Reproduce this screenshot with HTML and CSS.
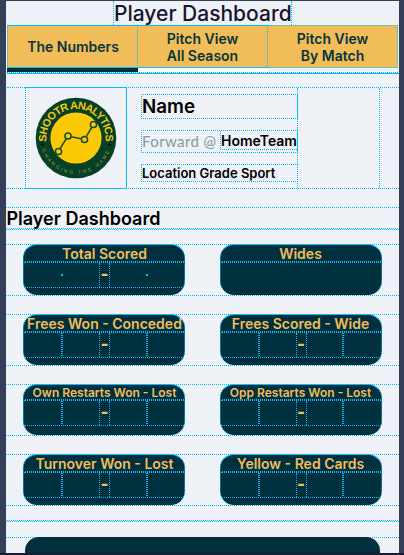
FILE: index.html
```html
<!DOCTYPE html>
<html lang="en">
<head>
<meta charset="utf-8">
<title>Player Dashboard</title>
<link rel="stylesheet" href="styles.css">
</head>
<body>
<main class="page">
  <header class="top"><h1>Player Dashboard</h1></header>
  <nav class="tabs">
    <a class="tab active"><span>The Numbers</span></a>
    <a class="tab"><span>Pitch View<br>All Season</span></a>
    <a class="tab last"><span>Pitch View<br>By Match</span></a>
  </nav>
  <section class="profile">
    <div class="logo">
      <svg width="82" height="82" viewBox="0 0 82 82">
        <defs>
          <path id="upper" d="M11.600 45A29.600 29.600 0 1 1 70.400 45"/>
          <path id="lower" d="M5.500 47A36 36 0 0 0 76.500 47"/>
        </defs>
        <circle cx="41" cy="41" r="40.300" fill="#064029"/>
        <circle cx="41" cy="41" r="25.600" fill="#fbc905"/>
        <text class="brand"><textPath href="#upper" startOffset="0.300" textLength="99">SHOOTR ANALYTICS</textPath></text>
        <text class="motto"><textPath href="#lower" startOffset="6" textLength="87">CHANGING THE GAME</textPath></text>
        <path d="M7.500 45.500v4M5.500 47.500h4M74.500 45.500v4M72.500 47.500h4" stroke="#001713"/>
        <g fill="#fbc905" stroke="#174c27" stroke-width="1.500">
          <path fill="none" d="M23.500 54L33 39 49.500 42.500 58.500 27.500"/>
          <circle cx="23.500" cy="54.500" r="3.100"/><circle cx="33" cy="39" r="3.100"/><circle cx="49.500" cy="42.500" r="3.100"/><circle cx="58.500" cy="27.500" r="3.100"/>
        </g>
      </svg>
    </div>
    <div class="details">
      <div class="name">Name</div>
      <div class="role"><span class="position">Forward @</span><span class="team">HomeTeam</span></div>
      <div class="meta">Location Grade Sport</div>
    </div>
    <div class="spare"></div>
  </section>
  <h2>Player Dashboard</h2>
  <section class="row first">
    <article class="card dots"><h3>Total Scored</h3><div class="cells"><i></i><b>-</b><i></i></div></article>
    <article class="card empty"><h3>Wides</h3></article>
  </section>
  <section class="row">
    <article class="card"><h3>Frees Won - Conceded</h3><div class="cells"><i></i><b>-</b><i></i></div></article>
    <article class="card"><h3>Frees Scored - Wide</h3><div class="cells"><i></i><b>-</b><i></i></div></article>
  </section>
  <section class="row compact">
    <article class="card"><h3>Own Restarts Won - Lost</h3><div class="cells"><i></i><b>-</b><i></i></div></article>
    <article class="card"><h3>Opp Restarts Won - Lost</h3><div class="cells"><i></i><b>-</b><i></i></div></article>
  </section>
  <section class="row final">
    <article class="card"><h3>Turnover Won - Lost</h3><div class="cells"><i></i><b>-</b><i></i></div></article>
    <article class="card"><h3>Yellow - Red Cards</h3><div class="cells"><i></i><b>-</b><i></i></div></article>
  </section>
  <div class="divider"></div>
  <section class="chart"><div class="panel"></div></section>
</main>
</body>
</html>
```
FILE: styles.css
```css
* { box-sizing: border-box; }
:root {
  --guide: #00bfff;
  --navy: #002f3e;
  --gold: #f0bd59;
  --dots: repeating-linear-gradient(90deg, var(--guide) 0 1px, transparent 1px 2px);
}
body {
  margin: 0;
  height: 555px;
  overflow: hidden;
  background: #334058;
  border-top: 1px solid #334058;
  border-bottom: 2px solid #181b33;
  padding: 0 5px 0 6px;
  font-family: Inter, "Liberation Sans", sans-serif;
}
.page { height: 552px; overflow: hidden; background: #eef1f6; }
h1, h2, h3 { margin: 0; }
.top { height: 24px; display: flex; padding-left: 107px; }
h1 {
  width: 179px;
  border: dotted var(--guide);
  border-width: 0 1px;
  font-size: 21px;
  line-height: 26px;
  font-weight: 500;
  letter-spacing: 0;
  color: #17142e;
  white-space: nowrap;
}
.tabs {
  display: grid;
  grid-template-columns: 131px 130px 130px;
  height: 49px;
  margin-left: 1px;
  border-bottom: 1px solid var(--guide);
  background: var(--dots) 0 100% / 100% 1px no-repeat;
}
.tab { height: 47px; background: #fff; }
.tab span {
  display: flex;
  align-items: center;
  justify-content: center;
  height: 43px;
  border-top: 1px solid var(--guide);
  border-bottom: 1px solid var(--guide);
  border-right: 1px dotted var(--guide);
  background: var(--gold);
  color: #07343b;
  font-size: 14px;
  line-height: 17px;
  font-weight: 600;
  text-align: center;
}
.active { background: var(--navy); }
.active span { padding-left: 1px; border-left: 1px dotted var(--guide); }
.last { background: #eef1f6; }
.last span { border-top-style: dotted; border-bottom-style: dotted; }
.profile {
  display: flex;
  height: 102px;
  margin: 13px 0 0 1px;
  border: dotted var(--guide);
  border-width: 1px 0;
}
.logo {
  width: 102px;
  height: 102px;
  margin: -1px 0 0 18px;
  padding: 9px 0 0 9px;
  border: 1px solid var(--guide);
  border-left-style: dotted;
}
.logo svg { display: block; }
.brand { font: 700 10.800px "Liberation Sans", sans-serif; fill: #f3c907; }
.motto { font: 4.800px "Liberation Sans", sans-serif; fill: #a3a317; }
.details {
  width: 171px;
  padding: 6px 0 0 14px;
  border-right: 1px dotted var(--guide);
}
.name, .role, .meta { width: 157px; border: 1px dotted var(--guide); white-space: nowrap; }
.name { height: 25px; font-size: 18.800px; line-height: 23px; font-weight: 600; }
.role { display: flex; height: 23px; margin-top: 11px; }
.position { width: 78px; font: 400 15px/21px Lato, sans-serif; letter-spacing: .4px; color: #7f9da2; }
.team { height: 19px; border-left: 1px dotted var(--guide); border-bottom: 1px dotted var(--guide); font-size: 14px; line-height: 20px; font-weight: 600; }
.meta { height: 18px; margin-top: 11px; font-size: 13px; line-height: 16px; font-weight: 600; }
.spare { width: 82px; border-right: 1px dotted var(--guide); }
h2 {
  height: 23px;
  margin-top: 18px;
  border: dotted var(--guide);
  border-width: 1px 0;
  background: var(--dots) 1px 100% / 100% 1px no-repeat;
  font-size: 18px;
  line-height: 22px;
  font-weight: 600;
  text-indent: .5px;
}
.row {
  display: flex;
  height: 52px;
  padding-left: 17px;
  gap: 35px;
  margin-top: 18px;
  border: dotted var(--guide);
  border-width: 1px 0;
}
.first { margin-top: 14px; }
.card {
  width: 162px;
  height: 51px;
  margin-top: -1px;
  border-radius: 14px;
  border: 1px dotted var(--guide);
  border-top-style: solid;
  border-bottom: 0;
  background: var(--navy);
  color: var(--gold);
}
.card h3 {
  height: 18px;
  padding-left: 1px;
  border-bottom: 1px dotted var(--guide);
  background: var(--dots) 1px 100% / 100% 1px no-repeat;
  font-size: 14px;
  line-height: 18px;
  font-weight: 600;
  text-align: center;
  white-space: nowrap;
}
.card + .card h3 { padding: 0 1px 0 0; }
.row.compact h3 { height: 16px; font-size: 12px; line-height: 16px; }
.cells {
  display: flex;
  justify-content: space-between;
  height: 25px;
  padding: 0 36px 0 37px;
  border-bottom: 1px dotted var(--guide);
}
.card + .card .cells { padding: 0 37px; }
.cells i { width: 2px; background: repeating-linear-gradient(var(--guide) 0 1px, transparent 1px 2px); }
.cells b { width: 11px; border: dotted var(--guide); border-width: 0 1px; font-size: 17px; line-height: 22px; font-weight: 800; text-align: center; display: flex; justify-content: center; }
.dots .cells i { height: 2px; margin-top: 11px; background: var(--guide); }
.divider { height: 16px; border-bottom: 1px dotted var(--guide); background: var(--dots) 1px 100% / 100% 1px no-repeat; }
.chart { height: 30px; margin-top: 15px; padding: 0 19px; border-top: 1px dotted var(--guide); }
.panel { height: 30px; margin-top: -1px; border-radius: 14px 14px 0 0; background: var(--navy); }
```
